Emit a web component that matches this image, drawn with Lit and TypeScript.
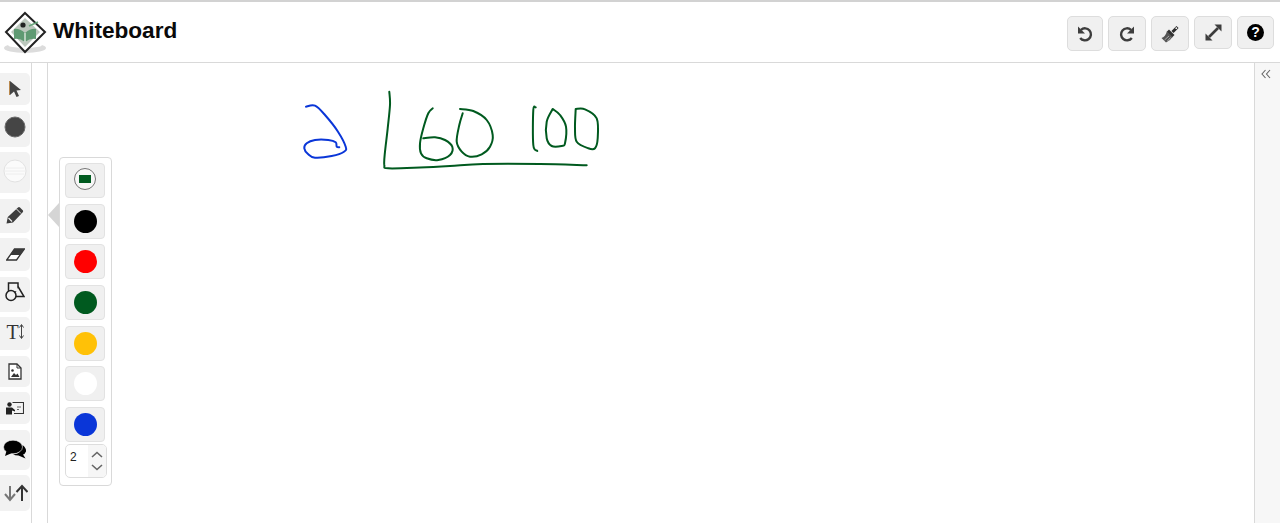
import { LitElement, html, css, svg } from "lit";
import { customElement } from "lit/decorators.js";

const colors = ["#000000", "#ff0000", "#005a1f", "#ffc107", "#ffffff", "#0a36d8"];

type P = [number, number];
// Smooth a hand-drawn stroke through its sampled points (Catmull-Rom to Bezier).
const smooth = (pts: P[]) => {
  let d = `M${pts[0][0]} ${pts[0][1]}`;
  for (let i = 0; i < pts.length - 1; i++) {
    const p0 = pts[Math.max(i - 1, 0)];
    const p1 = pts[i];
    const p2 = pts[i + 1];
    const p3 = pts[Math.min(i + 2, pts.length - 1)];
    const c1x = p1[0] + (p2[0] - p0[0]) / 6;
    const c1y = p1[1] + (p2[1] - p0[1]) / 6;
    const c2x = p2[0] - (p3[0] - p1[0]) / 6;
    const c2y = p2[1] - (p3[1] - p1[1]) / 6;
    d += ` C${c1x.toFixed(1)} ${c1y.toFixed(1)} ${c2x.toFixed(1)} ${c2y.toFixed(1)} ${p2[0]} ${p2[1]}`;
  }
  return d;
};

const blue = smooth([[306, 106.7], [315, 105.7], [325, 115], [338, 131.7], [345.7, 146.7], [344, 151.7], [331.7, 156], [315, 157.7], [308, 154], [304.3, 148.3], [306.7, 143.3], [315, 140], [328.3, 140], [335.7, 142.3], [336.7, 146.7], [339.3, 147.3]]);
const green = [
  [[389.3, 91.7], [390, 105], [387.7, 128.3], [385, 151.7], [384.3, 165], [388.3, 168.3], [420, 167.5], [450, 166], [483, 164], [540, 164], [586.7, 165.3]],
  [[432.7, 108.3], [428.3, 113.3], [423.3, 128.3], [420, 143.3], [421, 153.3], [426.7, 158.3], [438.3, 160], [450, 155], [452.3, 146.7], [445, 140], [435, 137.3], [423.3, 138.3]],
  [[460, 109], [473.3, 111], [486.7, 120], [492.7, 135], [490, 146.7], [481.7, 154.3], [470, 156.7], [461.7, 151.7], [456.7, 141.7], [459.3, 125], [462.7, 113.3]],
  [[535.7, 107.3], [533.3, 110], [533.3, 145], [537.3, 151]],
  [[552.7, 109], [560, 115], [566, 126.7], [565, 143.3], [561.7, 146], [551.7, 146], [546.7, 138.3], [546.7, 121.7], [552.7, 109]],
  [[575.7, 109], [585, 109.3], [596.7, 118.3], [597.7, 138.3], [595, 148.3], [588.3, 148.3], [576.7, 141.7], [575, 128.3], [575.7, 109]],
].map((p) => smooth(p as P[]));

const icon = (w: number, h: number, body: unknown) =>
  html`<svg width=${w} height=${h} viewBox="0 0 ${w} ${h}">${body}</svg>`;

const sideButtons = [
  { cls: "h32", body: icon(14, 18, svg`<path d="M2 1 L13 10 L8.5 10.5 L11 16 L8.5 17 L6 11.5 L2 15 Z" fill="#444"/><path d="M1.5 1 V15" stroke="#b9894f" stroke-width="1"/>`) },
  { cls: "h36 up", body: icon(22, 22, svg`<circle cx="11" cy="11" r="10" fill="#454545" stroke="#6b6b6b" stroke-width="1"/>`) },
  { cls: "h41 up", body: icon(24, 24, svg`<circle cx="12" cy="12" r="11" fill="#fbfbfb" stroke="#e2e2e2" stroke-width="1"/><path d="M3 9H21M2 12H22M3 15H21" stroke="#eee" stroke-width="1"/>`) },
  { cls: "h34 up1", body: icon(18, 18, svg`<path d="M0.5 17.5 L1.8 11 L12 1.5 Q13 0.5 14 1.5 L17 4.5 Q17.5 5.5 16.5 6.5 L7 16.5 Z" fill="#3d3d3d"/><path d="M2.5 12 L6 15.5" stroke="#eee" stroke-width="1.2"/><path d="M10.5 3 L15 7.5" stroke="#eee" stroke-width="1"/>`) },
  { cls: "h33", body: icon(19, 13, svg`<path d="M0.7 12 H10.5 L18.3 1 H8.5 Z" fill="#fff" stroke="#333" stroke-width="1.3"/><path d="M4 7 L8.5 1 H18.5 L14 7 Z" fill="#3a3a3a"/>`) },
  { cls: "h35 up", body: icon(20, 20, svg`<rect x="3.5" y="1" width="9.5" height="9" fill="none" stroke="#222" stroke-width="1.5"/><path d="M13 4.5 L19 14.5 H9.5" fill="#f2f2f2" stroke="#222" stroke-width="1.5"/><circle cx="6" cy="13.5" r="5" fill="#f2f2f2" stroke="#222" stroke-width="1.5"/>`) },
  { cls: "h33 up", body: html`<span class="ti">T<svg class="ti-arrow" width="5" height="15" viewBox="0 0 5 15"><path d="M2.5 1 V14 M0.5 3.5 L2.5 0.5 L4.5 3.5 M0.5 11.5 L2.5 14.5 L4.5 11.5" fill="none" stroke="#444" stroke-width="1"/></svg></span>` },
  { cls: "h31", body: icon(14, 17, svg`<path d="M1 1 H9 L13 5 V16 H1 Z" fill="#fff" stroke="#333" stroke-width="1.3"/><path d="M3 14 L6 10 L8 12 L9.5 10.5 L11.5 14 Z" fill="#333"/><circle cx="4.5" cy="7.5" r="1.3" fill="#333"/><path d="M9 1 V5 H13" fill="none" stroke="#333"/>`) },
  { cls: "h32", body: icon(18, 13, svg`<circle cx="3.5" cy="2.5" r="2.2" fill="#222"/><path d="M0 5.5 H6 L9 8 V9.5 L6 8.5 V12.5 H0 Z" fill="#222"/><path d="M6.5 0.5 H17.5 V11.5 H8" fill="none" stroke="#333" stroke-width="1.1"/><path d="M11 5 H15 M11 7.5 H13" stroke="#666"/>`) },
  { cls: "h40", body: icon(24, 19, svg`<path d="M19.5 5 Q23.5 8 23 11.5 Q22 14 20 14.5 L22.5 18.5 L15.5 15.5 Q12 15.5 10 14.5 Q18.5 14 19.5 5 Z" fill="#000"/><ellipse cx="10" cy="7" rx="9.5" ry="6.8" fill="#000" stroke="#f2f2f2" stroke-width="0.6"/><path d="M3.5 11 L2 16 L9 13 Z" fill="#000"/>`) },
  { cls: "h36", body: icon(25, 18, svg`<path d="M7 2 V15 M2 10 L7 16 L12 10" fill="none" stroke="#777" stroke-width="2"/><path d="M19 17 V3 M13.5 8 L19 2 L24.5 8" fill="none" stroke="#333" stroke-width="2"/>`) },
];

const topButtons = [
  { cls: "undo", body: icon(16, 16, svg`<path d="M4 3.8 A6 6 0 1 1 3.2 12" fill="none" stroke="#3d3d3d" stroke-width="2.4"/><path d="M1 0.5 L1 7.5 L8 7.5 Z" fill="#3d3d3d"/>`) },
  { cls: "redo", body: icon(16, 16, svg`<path d="M12 3.8 A6 6 0 1 0 12.8 12" fill="none" stroke="#3d3d3d" stroke-width="2.4"/><path d="M15 0.5 L15 7.5 L8 7.5 Z" fill="#3d3d3d"/>`) },
  { cls: "brush", body: icon(18, 18, svg`<path d="M16.5 2 L11.5 7" stroke="#2c2c2c" stroke-width="3"/><circle cx="15.3" cy="3.2" r="0.9" fill="#eee"/><path d="M8 4.5 L13.5 10 L11 12.5 L5.5 7 Z" fill="#333"/><path d="M6 6.5 L11.5 12 Q9 16 5 17.5 L0.5 13 Q4 12 6 6.5 Z" fill="#555"/><path d="M3.5 15 L8 11 M6.5 16 L9.5 12.5" stroke="#bbb" stroke-width="0.8"/>`) },
  { cls: "expand", body: icon(17, 17, svg`<path d="M4 13 L13 4" stroke="#3d3d3d" stroke-width="2.6"/><path d="M9.5 0.5 H16.5 V7.5 Z" fill="#3d3d3d"/><path d="M0.5 9.5 V16.5 H7.5 Z" fill="#3d3d3d"/>`) },
  { cls: "help", body: html`<span class="q">?</span>` },
];

@customElement("app-root")
export class AppRoot extends LitElement {
  static styles = css`
    :host {
      display: flex;
      flex-direction: column;
      height: 100vh;
      overflow: hidden;
      background: #fff;
      font-family: "Liberation Sans", Arial, sans-serif;
    }
    .header {
      height: 60px;
      flex: none;
      border-top: 2px solid #d2d2d2;
      border-bottom: 1px solid #d9d9d9;
      display: flex;
      align-items: center;
      padding: 0 6px 0 3px;
    }
    .brand { display: flex; align-items: center; gap: 3px; flex: 1; }
    .logo { display: block; }
    .title { font-size: 22.6px; font-weight: 700; color: #0a0a0a; margin-top: -2px; }
    .tools { display: flex; align-items: flex-start; gap: 5px; padding-top: 3px; }
    .tbtn {
      height: 35px;
      background: #f0f0f0;
      border: 1px solid #ddd;
      border-radius: 5px;
      box-sizing: border-box;
      display: flex;
      align-items: center;
      justify-content: center;
    }
    .undo { width: 36px; }
    .redo, .brush { width: 38px; }
    .expand { width: 38px; height: 33px; }
    .help { width: 37px; height: 33px; }
    .q {
      width: 17px; height: 17px; border-radius: 50%; background: #000; color: #fff;
      font-size: 14px; font-weight: 700; line-height: 17px; text-align: center;
    }
    .body { flex: 1; display: flex; min-height: 0; }
    .side {
      width: 31px;
      flex: none;
      border-right: 1px solid #d9d9d9;
      display: flex;
      flex-direction: column;
      gap: 5.5px;
      padding-top: 10px;
    }
    .sbtn {
      width: 30px;
      background: #f2f2f2;
      border-radius: 0 5px 5px 0;
      display: flex;
      align-items: center;
      justify-content: center;
      flex: none;
      box-sizing: border-box;
    }
    .sbtn svg { flex: none; }
    .up { padding-bottom: 4px; }
    .up1 { padding-bottom: 2px; }
    .h31 { height: 31px; } .h32 { height: 32px; } .h33 { height: 33px; } .h34 { height: 34px; }
    .h35 { height: 35px; } .h36 { height: 36px; } .h40 { height: 40px; } .h41 { height: 41px; }
    .ti {
      font-family: "Liberation Serif", serif; font-size: 20px; color: #333; line-height: 1;
      white-space: nowrap; display: flex; align-items: center;
    }
    .ti-arrow { margin-left: 0; }
    .gutter { width: 15px; flex: none; border-right: 1px solid #d9d9d9; }
    .canvas { flex: 1; position: relative; }
    .ink { position: absolute; left: -48px; top: -63px; width: 1280px; height: 523px; pointer-events: none; }
    .right {
      width: 26px;
      flex: none;
      border-left: 1px solid #d9d9d9;
      background: #f7f7f7;
      display: flex;
      justify-content: center;
      padding: 6px 2px 0 0;
      box-sizing: border-box;
    }
    .right svg { margin-right: 2px; }
    .palette {
      position: absolute;
      left: 11px;
      top: 94px;
      width: 53px;
      height: 329px;
      box-sizing: border-box;
      background: #fff;
      border: 1px solid #d9d9d9;
      border-radius: 4px;
      padding: 5px;
      display: flex;
      flex-direction: column;
      gap: 5.65px;
    }
    .tip {
      position: absolute;
      left: 0;
      top: 140px;
      width: 0; height: 0;
      border-style: solid;
      border-width: 12px 11px 12px 0;
      border-color: transparent #d5d5d5 transparent transparent;
    }
    .swatch {
      width: 40px;
      height: 35px;
      background: #f0f0f0;
      border: 1px solid #e2e2e2;
      border-radius: 4px;
      box-sizing: border-box;
      display: flex;
      align-items: center;
      justify-content: center;
      flex: none;
    }
    .first { padding-bottom: 4px; }
    .dot { width: 23px; height: 23px; border-radius: 50%; }
    .current {
      width: 22px; height: 22px; border-radius: 50%; border: 1px solid #777; background: #f7f7f7;
      box-sizing: border-box; display: flex; align-items: center; justify-content: center;
    }
    .current i { display: block; width: 12px; height: 8px; background: #005a1f; }
    .spin {
      width: 42px;
      height: 34px;
      margin-top: -3.2px;
      box-sizing: border-box;
      border: 1px solid #ddd;
      border-radius: 5px;
      display: flex;
      flex: none;
      overflow: hidden;
      font-size: 12px;
      color: #222;
    }
    .spin .val { flex: 1; padding: 5px 0 0 4px; }
    .spin .arrows {
      width: 18px; background: #f6f6f6; display: flex; flex-direction: column;
      align-items: center; justify-content: space-evenly;
    }
  `;

  render() {
    return html`
      <div class="header">
        <div class="brand">
          <svg class="logo" width="47" height="52" viewBox="0 0 47 52">
            <ellipse cx="22" cy="42" rx="21" ry="5" fill="#dcdcdc"/>
            <ellipse cx="22" cy="39" rx="17" ry="3" fill="#fff"/>
            <path d="M22 7 L42 26 L22 46 L3 26 Z" fill="#fff" stroke="#222" stroke-width="2"/>
            <path d="M22 12 L37 26 L22 41 L8 26 Z" fill="#bcc7bd"/>
            <circle cx="20" cy="19" r="2.6" fill="#222"/>
            <path d="M11 23 Q16 22 22 27 Q28 22 33 23 V33 Q27 32 22 36 Q17 32 11 33 Z" fill="#5f9a72"/>
            <path d="M22 27 V36" stroke="#dfe8df" stroke-width="1.4"/>
            <path d="M26 20 L35 16" stroke="#6aa67c" stroke-width="1.5"/>
          </svg>
          <span class="title">Whiteboard</span>
        </div>
        <div class="tools">
          ${topButtons.map((b) => html`<div class="tbtn ${b.cls}">${b.body}</div>`)}
        </div>
      </div>
      <div class="body">
        <div class="side">
          ${sideButtons.map((b) => html`<div class="sbtn ${b.cls}">${b.body}</div>`)}
        </div>
        <div class="gutter"></div>
        <div class="canvas">
          <svg class="ink" viewBox="0 0 1280 523" fill="none" stroke-linecap="round" stroke-linejoin="round">
            <path d=${blue} stroke="#0a36d8" stroke-width="2"/>
            ${green.map((d) => svg`<path d=${d} stroke="#005a1f" stroke-width="2"/>`)}
          </svg>
          <div class="tip"></div>
          <div class="palette">
            <div class="swatch first"><div class="current"><i></i></div></div>
            ${colors.map((c) => html`<div class="swatch"><div class="dot" style="background:${c}"></div></div>`)}
            <div class="spin">
              <div class="val">2</div>
              <div class="arrows">
                <svg width="12" height="7" viewBox="0 0 12 7"><path d="M1 6 L6 1.5 L11 6" fill="none" stroke="#666" stroke-width="1.6"/></svg>
                <svg width="12" height="7" viewBox="0 0 12 7"><path d="M1 1 L6 5.5 L11 1" fill="none" stroke="#666" stroke-width="1.6"/></svg>
              </div>
            </div>
          </div>
        </div>
        <div class="right">
          <svg width="10" height="10" viewBox="0 0 10 10"><path d="M4.5 1 L1 5 L4.5 9 M9 1 L5.5 5 L9 9" fill="none" stroke="#666" stroke-width="1.1"/></svg>
        </div>
      </div>
    `;
  }
}
